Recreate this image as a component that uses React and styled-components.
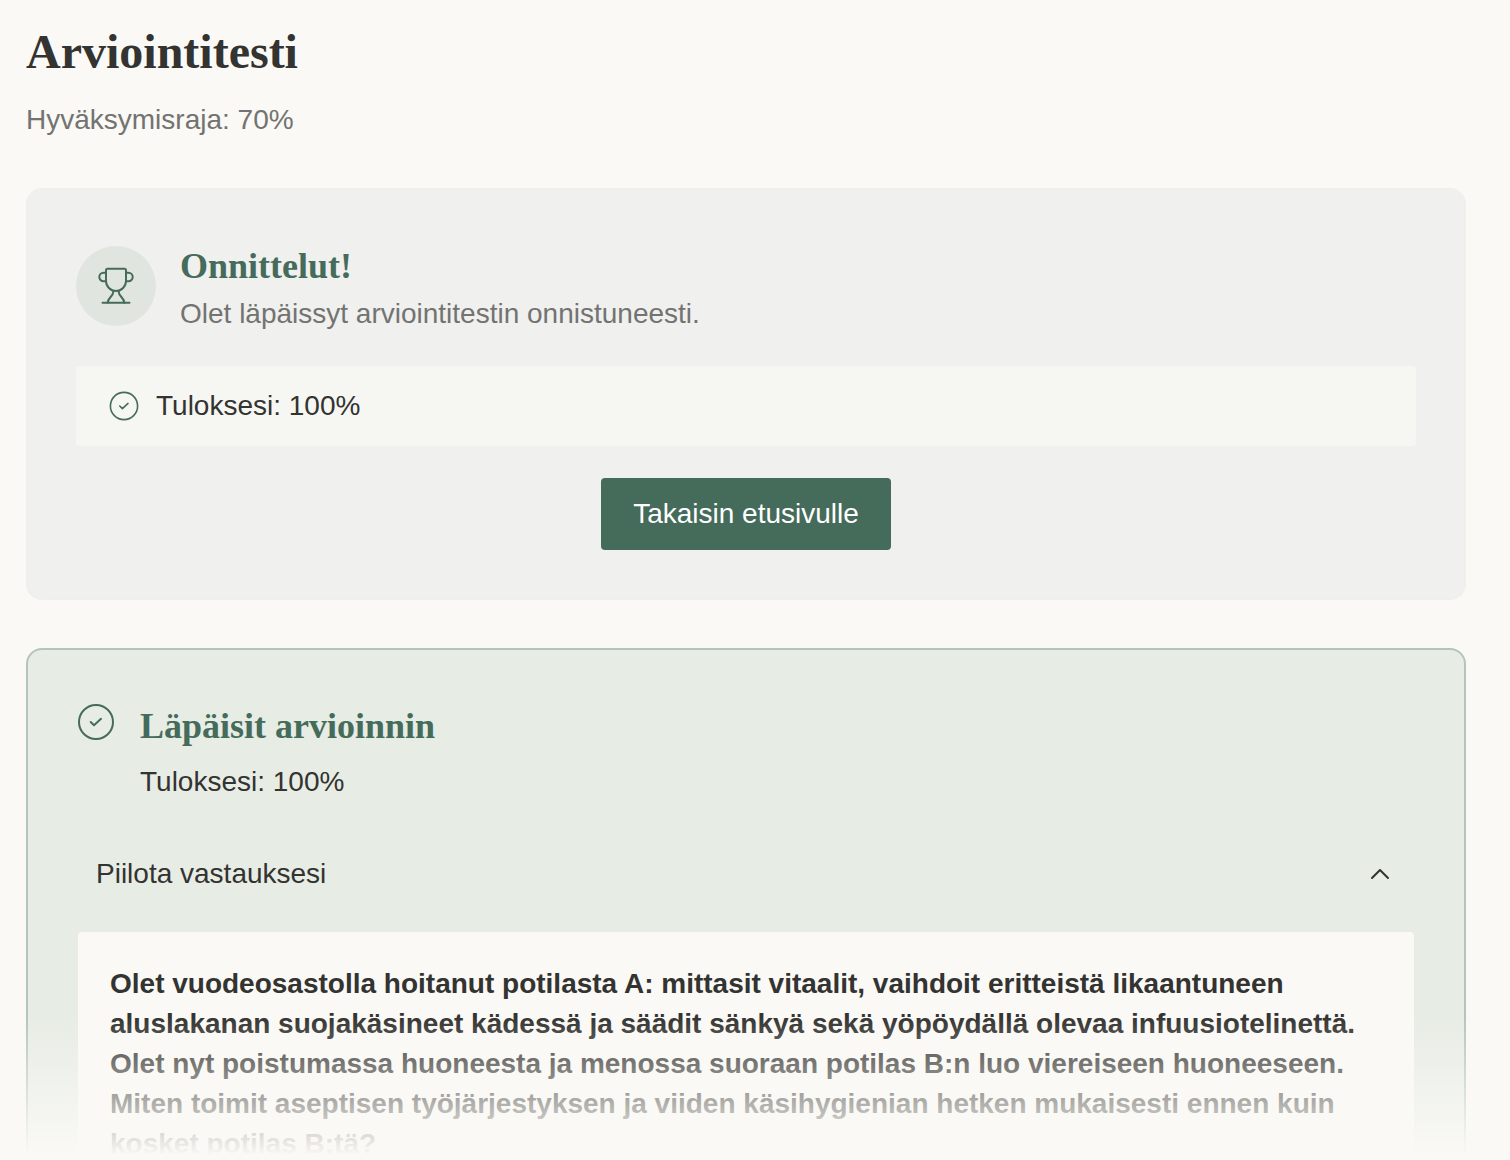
import React, { useState } from 'react';
import styled, { createGlobalStyle, ThemeProvider } from 'styled-components';

const theme = {
  background: '#faf9f5',
  muted: '#f0f0ee',
  subtle: '#f6f7f2',
  success: '#e7ece5',
  successBorder: '#b3c5ba',
  primary: '#456b5b',
  text: '#333331',
  textSecondary: '#737371',
  serif: '"Liberation Serif", "Times New Roman", serif',
  sans: '"Liberation Sans", Helvetica, Arial, sans-serif',
};

const GlobalStyle = createGlobalStyle`
  * {
    box-sizing: border-box;
  }

  body {
    margin: 0;
    background: ${theme.background};
    color: ${theme.text};
    font-family: ${theme.sans};
    font-size: 28px;
    line-height: 40px;
  }

  h1, h2, p {
    margin: 0;
  }
`;

const Page = styled.main`
  position: relative;
  height: 100vh;
  overflow: hidden;
  padding: 20px 44px 0 26px;
`;

const Header = styled.header`
  display: flex;
  flex-direction: column;
  gap: 16px;
  margin-bottom: 48px;
`;

const PageTitle = styled.h1`
  font-family: ${props => props.theme.serif};
  font-size: 48px;
  line-height: 64px;
`;

const Title = styled.h2`
  color: ${props => props.theme.primary};
  font-family: ${props => props.theme.serif};
  font-size: 36px;
  line-height: 56px;
`;

const Secondary = styled.p`
  color: ${props => props.theme.textSecondary};
`;

const Card = styled.section`
  padding: 48px;
  margin-bottom: 48px;
  border: 2px solid ${props => (props.$passed ? props.theme.successBorder : '#efefeb')};
  border-radius: 16px;
  background: ${props => (props.$passed ? props.theme.success : props.theme.muted)};
`;

const Row = styled.div`
  display: flex;
  align-items: ${props => props.$align || 'center'};
  gap: 24px;
  margin-bottom: 32px;
`;

const Badge = styled.div`
  display: flex;
  align-items: center;
  justify-content: center;
  width: 80px;
  height: 80px;
  border-radius: 50%;
  background: #e0e6df;
  color: ${props => props.theme.primary};
`;

const TextStack = styled.div`
  display: flex;
  flex-direction: column;
  gap: ${props => props.$gap || 0}px;
`;

const Score = styled.div`
  display: flex;
  align-items: center;
  gap: 16px;
  padding: 20px 32px;
  margin-bottom: 32px;
  border-radius: 4px;
  background: ${props => props.theme.subtle};
`;

const Icon = styled.svg`
  flex: none;
  width: ${props => props.$size}px;
  height: ${props => props.$size}px;
  fill: none;
  stroke: currentColor;
  stroke-linecap: round;
  stroke-linejoin: round;
`;

const StatusIcon = styled(Icon)`
  color: ${props => props.theme.primary};
`;

const StatusMark = styled.div`
  display: flex;
  padding-top: 4px;
`;

const Actions = styled.div`
  display: flex;
  justify-content: center;
`;

const Button = styled.button`
  padding: 16px 32px;
  border: 0;
  border-radius: 4px;
  background: ${props => props.theme.primary};
  color: #fff;
  font: inherit;
  cursor: pointer;
`;

const Toggle = styled.button`
  display: flex;
  align-items: center;
  justify-content: space-between;
  width: 100%;
  padding: 20px;
  margin-bottom: 16px;
  border: 0;
  background: transparent;
  color: inherit;
  font: inherit;
  text-align: left;
  cursor: pointer;
`;

const Answers = styled.div`
  padding: 32px;
  border: 2px solid #e9ebe5;
  border-radius: 6px;
  background: ${props => props.theme.background};
`;

const Question = styled.p`
  font-weight: 700;
`;

const Fade = styled.div`
  position: absolute;
  right: 0;
  bottom: 0;
  left: 0;
  height: 144px;
  background: linear-gradient(to bottom, rgba(250, 249, 245, 0), ${props => props.theme.background} 97%);
  pointer-events: none;
`;

const TrophyIcon = () => (
  <Icon $size={40} viewBox="0 0 40 40" strokeWidth="2" aria-hidden="true">
    <path d="M11.5 2.8h17a1.5 1.5 0 0 1 1.5 1.5v10.7a10 10 0 0 1-20 0V4.300a1.500 1.500 0 0 1 1.500-1.500z" />
    <path d="M10 6.800H7.500a4.200 4.200 0 0 0 0 8.400H10" />
    <path d="M30 6.800h2.500a4.200 4.200 0 0 1 0 8.400H30" />
    <path d="M17.200 25v1.200c0 1.800-1 3-2.600 4.800S11.700 34.500 11.700 36.700" />
    <path d="M22.800 25v1.200c0 1.800 1 3 2.600 4.800S28.300 34.500 28.300 36.700" />
    <path d="M6.500 36.700h27" />
  </Icon>
);

const CheckIcon = ({ size }) => (
  <StatusIcon $size={size} viewBox="0 0 40 40" strokeWidth="2" aria-hidden="true">
    <circle cx="20" cy="20" r="17" />
    <path d="M14.700 20l3.300 3.200 7-6.400" />
  </StatusIcon>
);

const ChevronUp = () => (
  <Icon $size={32} viewBox="0 0 32 32" strokeWidth="2" aria-hidden="true">
    <path d="M8 20l8-8 8 8" />
  </Icon>
);

const App = () => {
  const [isOpen, setIsOpen] = useState(true);
  const score = 100;

  return (
    <ThemeProvider theme={theme}>
      <GlobalStyle />
      <Page>
        <Header>
          <PageTitle>Arviointitesti</PageTitle>
          <Secondary>Hyväksymisraja: 70%</Secondary>
        </Header>

        <Card>
          <Row>
            <Badge>
              <TrophyIcon />
            </Badge>
            <TextStack>
              <Title>Onnittelut!</Title>
              <Secondary>Olet läpäissyt arviointitestin onnistuneesti.</Secondary>
            </TextStack>
          </Row>
          <Score>
            <CheckIcon size={32} />
            <span>Tuloksesi: {score}%</span>
          </Score>
          <Actions>
            <Button type="button">Takaisin etusivulle</Button>
          </Actions>
        </Card>

        <Card $passed>
          <Row $align="flex-start">
            <StatusMark>
              <CheckIcon size={40} />
            </StatusMark>
            <TextStack $gap={8}>
              <Title>Läpäisit arvioinnin</Title>
              <p>Tuloksesi: {score}%</p>
            </TextStack>
          </Row>
          <Toggle type="button" aria-expanded={isOpen} onClick={() => setIsOpen(!isOpen)}>
            {isOpen ? 'Piilota vastauksesi' : 'Näytä vastauksesi'}
            <ChevronUp />
          </Toggle>
          {isOpen && (
            <Answers>
              <Question>
                Olet vuodeosastolla hoitanut potilasta A: mittasit vitaalit, vaihdoit eritteistä
                likaantuneen aluslakanan suojakäsineet kädessä ja säädit sänkyä sekä yöpöydällä
                olevaa infuusiotelinettä. Olet nyt poistumassa huoneesta ja menossa suoraan
                potilas B:n luo viereiseen huoneeseen. Miten toimit aseptisen työjärjestyksen ja
                viiden käsihygienian hetken mukaisesti ennen kuin kosket potilas B:tä?
              </Question>
            </Answers>
          )}
        </Card>
        <Fade />
      </Page>
    </ThemeProvider>
  );
};

export default App;
